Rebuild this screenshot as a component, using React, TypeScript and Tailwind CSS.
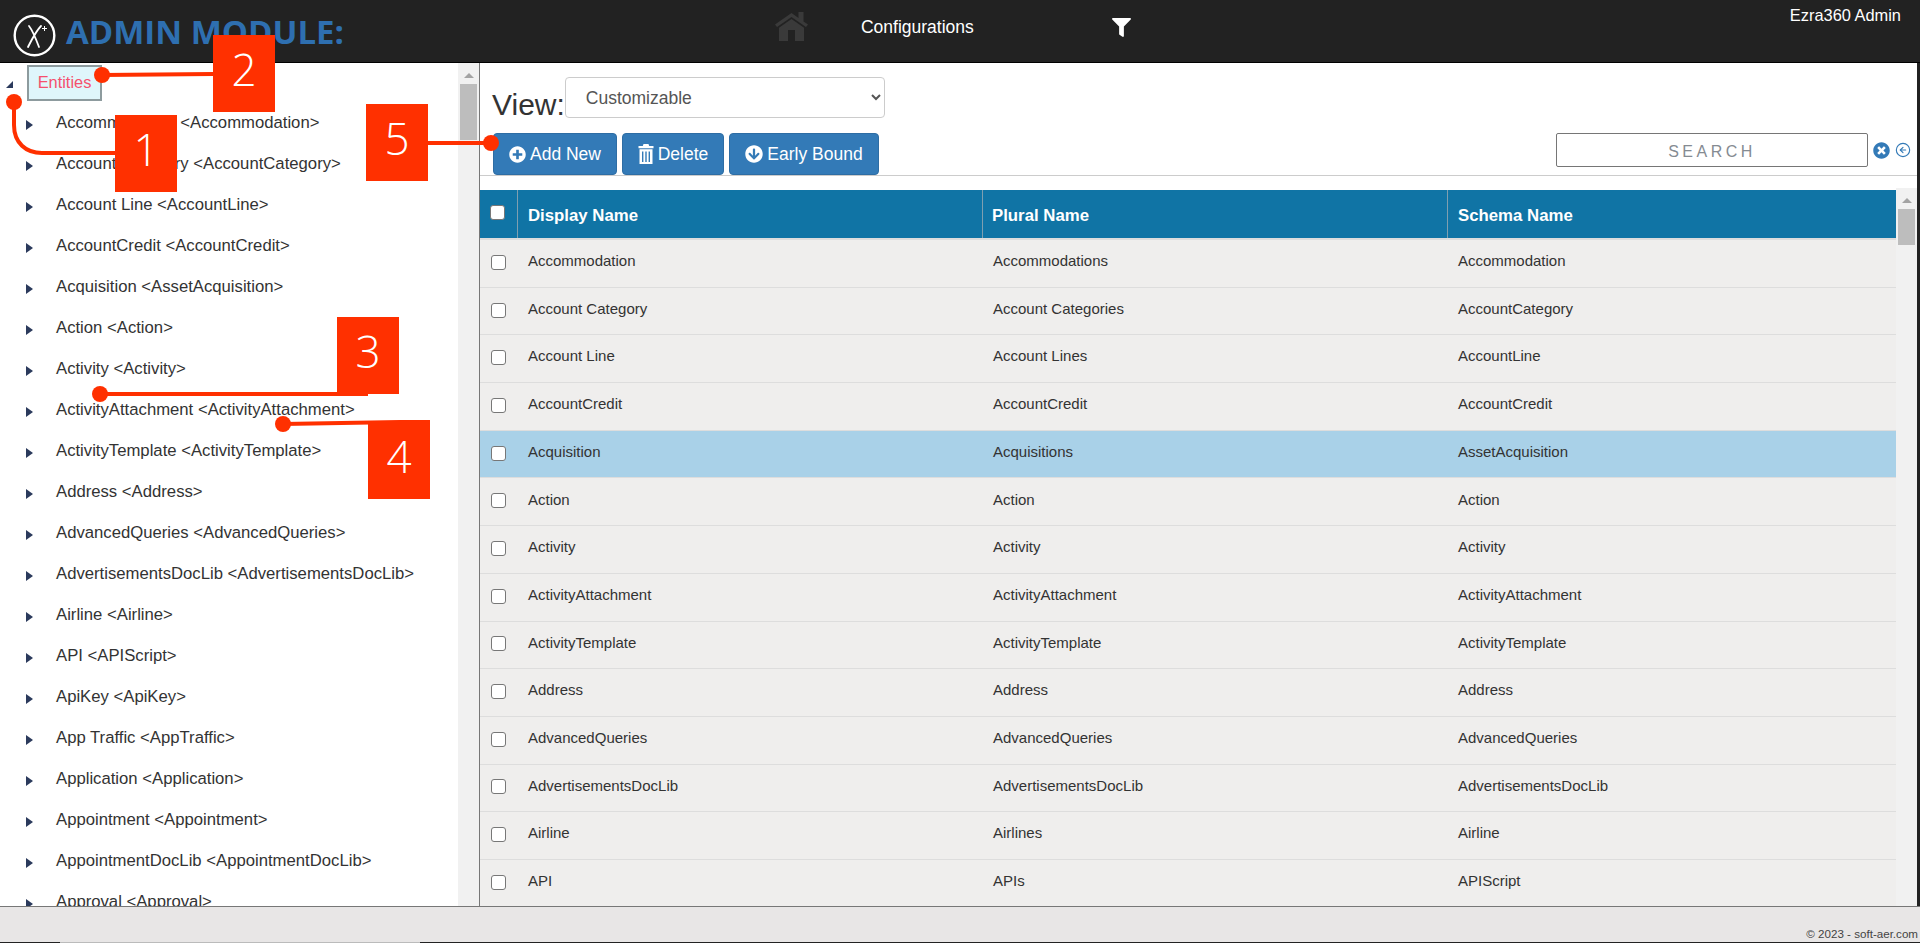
import { CircleArrowLeft } from "lucide-react";
import { FaArrowCircleDown, FaFilter, FaPlusCircle, FaTimesCircle } from "react-icons/fa";

const treeItems = [
  "Accommodation <Accommodation>",
  "Account Category <AccountCategory>",
  "Account Line <AccountLine>",
  "AccountCredit <AccountCredit>",
  "Acquisition <AssetAcquisition>",
  "Action <Action>",
  "Activity <Activity>",
  "ActivityAttachment <ActivityAttachment>",
  "ActivityTemplate <ActivityTemplate>",
  "Address <Address>",
  "AdvancedQueries <AdvancedQueries>",
  "AdvertisementsDocLib <AdvertisementsDocLib>",
  "Airline <Airline>",
  "API <APIScript>",
  "ApiKey <ApiKey>",
  "App Traffic <AppTraffic>",
  "Application <Application>",
  "Appointment <Appointment>",
  "AppointmentDocLib <AppointmentDocLib>",
  "Approval <Approval>",
];

const rows = [
  ["Accommodation", "Accommodations", "Accommodation"],
  ["Account Category", "Account Categories", "AccountCategory"],
  ["Account Line", "Account Lines", "AccountLine"],
  ["AccountCredit", "AccountCredit", "AccountCredit"],
  ["Acquisition", "Acquisitions", "AssetAcquisition"],
  ["Action", "Action", "Action"],
  ["Activity", "Activity", "Activity"],
  ["ActivityAttachment", "ActivityAttachment", "ActivityAttachment"],
  ["ActivityTemplate", "ActivityTemplate", "ActivityTemplate"],
  ["Address", "Address", "Address"],
  ["AdvancedQueries", "AdvancedQueries", "AdvancedQueries"],
  ["AdvertisementsDocLib", "AdvertisementsDocLib", "AdvertisementsDocLib"],
  ["Airline", "Airlines", "Airline"],
  ["API", "APIs", "APIScript"],
];

function Logo() {
  return (
    <svg width="43" height="43" viewBox="0 0 43 43" fill="none" stroke="#fff">
      <circle cx="21.500" cy="21.500" r="19.800" strokeWidth="2.400" />
      <path d="M16 12C20 17 23 25 26 33M28 12C23 17 19 25 15 33" strokeWidth="1.800" strokeLinecap="round" />
      <path d="M29 14.500h5M31.500 12v5" strokeWidth="1" />
    </svg>
  );
}

function HomeIcon() {
  return (
    <svg width="33" height="30" viewBox="0 0 33 30" fill="#3a3a3a" className="ml-[431px] mt-[12px]">
      <path d="M16.500 1L0 12.500L2 15L16.500 5L31 15L33 12.500L28.500 9.400V0H23.500V5.900Z" />
      <path d="M4 15.700L16.500 7L29 15.700V29H20V18H13V29H4Z" />
    </svg>
  );
}

function TrashIcon() {
  return (
    <svg width="16" height="20" viewBox="0 0 16 20" fill="#fff">
      <path d="M5.500 0h5l.7 2H15.500v2.200H.5V2h4.300z" />
      <path fillRule="evenodd" d="M1.500 5.200h13V20h-13zM4 7.500V18h1.400V7.500zM7.300 7.500V18h1.400V7.500zM10.600 7.500V18H12V7.500z" />
    </svg>
  );
}

function Arrow() {
  return <span className="mt-1 border-y-[5px] border-l-[7px] border-y-transparent border-l-[#2b3a5c]" />;
}

function Scrollbar({ thumbClass }: { thumbClass: string }) {
  return (
    <div className="flex w-[21px] shrink-0 flex-col items-center bg-[#f1f1f1]">
      <span className="mt-[10px] border-x-[5px] border-b-[5px] border-x-transparent border-b-[#a3a3a3]" />
      <div className={"mt-[6px] w-[17px] bg-[#bdbdbd] " + thumbClass} />
    </div>
  );
}

function Btn({ icon, label, width }: { icon: React.ReactNode; label: string; width: string }) {
  return (
    <button className={"flex h-[42px] items-center justify-center gap-1 rounded-[4px] border border-[#2e6da4] bg-[#337ab7] text-[17.5px] text-white " + width}>
      {icon}
      {label}
    </button>
  );
}

function Marker({ n, className }: { n: number; className: string }) {
  return (
    <div className={"absolute flex h-[77px] w-[62px] items-center justify-center bg-[#ff3000] pb-[9px] font-['Open_Sans',sans-serif] text-[44px] font-light text-white " + className}>
      {n}
    </div>
  );
}

function Annotations() {
  return (
    <>
      <svg className="pointer-events-none absolute inset-0" width="1920" height="943" fill="#ff3000" stroke="none">
        <g stroke="#ff3000" strokeWidth="4" fill="none">
          <path d="M102 75L213 74" />
          <path d="M14 102v23c0 18 12 28 28 28h74" />
          <path d="M427 143H495" />
          <path d="M100 394H368" />
          <path d="M283 424L400 422H430" />
        </g>
        <circle cx="102" cy="75" r="8" />
        <circle cx="14" cy="102" r="8" />
        <circle cx="491" cy="143" r="8" />
        <circle cx="100" cy="394" r="8" />
        <circle cx="283" cy="424" r="8" />
      </svg>
      <Marker n={2} className="left-[213px] top-[35px]" />
      <Marker n={1} className="left-[115px] top-[115px]" />
      <Marker n={5} className="left-[366px] top-[104px]" />
      <Marker n={3} className="left-[337px] top-[317px]" />
      <Marker n={4} className="left-[368px] top-[422px]" />
    </>
  );
}

export default function App() {
  return (
    <div className="relative flex h-[943px] w-[1920px] flex-col overflow-hidden bg-white font-['Liberation_Sans',Arial,sans-serif] text-[#333]">
      {/* top bar */}
      <header className="flex h-[63px] shrink-0 border-b border-black bg-[#222] text-white">
        <div className="ml-[13px] mt-[14px]">
          <Logo />
        </div>
        <div className="ml-[10px] mt-[10px] whitespace-nowrap font-['Open_Sans',sans-serif] text-[33px] font-bold leading-[44px] text-[#2e6fb0]">
          ADMIN MODULE:
        </div>
        <HomeIcon />
        <div className="ml-[53px] mt-[17px] text-[17.5px] leading-[20px]">Configurations</div>
        <FaFilter className="ml-[138px] mt-[18px]" size={19} />
        <div className="ml-auto mr-[19px] mt-[6px] text-[16.4px] leading-[19px]">Ezra360 Admin</div>
      </header>

      <div className="flex min-h-0 flex-1 pr-[3px] shadow-[inset_-3px_0_0_#222]">
        {/* entity tree */}
        <aside className="flex w-[480px] shrink-0 overflow-hidden border-r border-[#777]">
          <div className="min-w-0 flex-1">
            <div className="flex h-[39.500px] items-center pl-[6px]">
              <span className="mr-[14px] mt-1 border-b-[7px] border-l-[7px] border-b-[#2b3a5c] border-l-transparent" />
              <span className="flex h-[36px] w-[75px] items-center justify-center border-2 border-[#8d9b9e] bg-[#dff6fb] text-[16.400px] text-[#f5506e]">
                Entities
              </span>
            </div>
            {treeItems.map((item) => (
              <div key={item} className="flex h-[41px] items-center pl-[26px] text-[16.700px]">
                <Arrow />
                <span className="ml-[23px] whitespace-nowrap">{item}</span>
              </div>
            ))}
          </div>
          <Scrollbar thumbClass="h-[56px]" />
        </aside>

        {/* entity list */}
        <main className="flex min-w-0 flex-1 flex-col">
          <div className="flex h-[55px] shrink-0 items-start pl-[12px] pt-[14px]">
            <span className="mt-[8px] text-[30px] leading-[40px]">View:</span>
            <select className="h-[41px] w-[320px] rounded-[4px] border border-[#ccc] bg-white pl-[16px] text-[17.5px] text-[#555] outline-none">
              <option>Customizable</option>
            </select>
          </div>
          <div className="flex h-[58px] shrink-0 items-start gap-[5px] border-b border-[#ccc] pl-[13px] pt-[15px]">
            <Btn icon={<FaPlusCircle size={17} />} label="Add New" width="w-[124px]" />
            <Btn icon={<TrashIcon />} label="Delete" width="w-[102px]" />
            <Btn icon={<FaArrowCircleDown size={18} />} label="Early Bound" width="w-[150px]" />
            <input
              placeholder="SEARCH"
              className="ml-auto h-[34px] w-[312px] rounded-[2px] border border-[#767676] pt-[3px] text-center text-[16px] tracking-[3.500px] outline-none placeholder:text-[#858b92]"
            />
            <FaTimesCircle className="mt-[9px] text-[#337ab7]" size={17} />
            <CircleArrowLeft className="mr-[6px] mt-[9px] text-[#337ab7]" size={16} strokeWidth={1.700} />
          </div>

          <div className="mt-[12px] flex min-h-0 flex-1 overflow-hidden">
            <div className="min-w-0 flex-1 pt-[2px]">
              <div className="h-full bg-[#efeeed]">
                <div className="grid h-[50px] grid-cols-[38px_465px_465px_1fr] border-b-2 border-[#ddd] bg-[#1074a5] text-[16.800px] font-bold text-white">
                  <div className="flex justify-center border-r border-[#7f9fb0] pr-[2px] pt-[15px]">
                    <input type="checkbox" className="h-[15px] w-[15px] appearance-none rounded-[3px] border border-[#777] bg-white" />
                  </div>
                  <div className="flex items-center border-r border-[#7f9fb0] pl-[10px] pt-[3px]">Display Name</div>
                  <div className="flex items-center border-r border-[#7f9fb0] pl-[9px] pt-[3px]">Plural Name</div>
                  <div className="flex items-center pl-[10px] pt-[3px]">Schema Name</div>
                </div>
                {rows.map((r) => (
                  <div
                    key={r[0]}
                    className={
                      "grid h-[47.700px] grid-cols-[38px_465px_465px_1fr] items-center border-b border-[#ddd] text-[15px] " +
                      (r[0] === "Acquisition" ? "bg-[#a9d1e8]" : "")
                    }
                  >
                    <div className="flex justify-center pb-[2px] pr-[2px]">
                      <input type="checkbox" className="h-[15px] w-[15px] appearance-none rounded-[3px] border border-[#777] bg-white" />
                    </div>
                    <div className="pb-[4px] pl-[10px]">{r[0]}</div>
                    <div className="pb-[4px] pl-[10px]">{r[1]}</div>
                    <div className="pb-[4px] pl-[10px]">{r[2]}</div>
                  </div>
                ))}
              </div>
            </div>
            <Scrollbar thumbClass="h-[36px]" />
          </div>
        </main>
      </div>

      <footer className="flex h-[37px] shrink-0 items-end justify-end border-y border-b-[#222] border-t-[#777] bg-[#e8e6e6] pb-[1px] pr-[2px] text-[11.600px] leading-[15px] text-[#444]">
        © 2023 - soft-aer.com
      </footer>
      <div className="absolute bottom-0 left-[60px] h-px w-[360px] bg-[#bbb]" />

      <Annotations />
    </div>
  );
}
